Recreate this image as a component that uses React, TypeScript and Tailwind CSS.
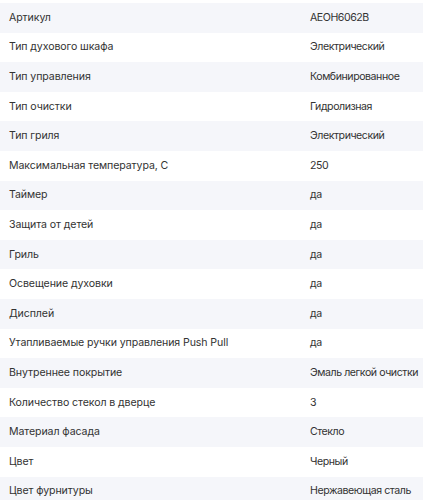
import React from 'react';

const specs: [string, string][] = [
  ['Артикул', 'AEOH6062B'],
  ['Тип духового шкафа', 'Электрический'],
  ['Тип управления', 'Комбинированное'],
  ['Тип очистки', 'Гидролизная'],
  ['Тип гриля', 'Электрический'],
  ['Максимальная температура, С', '250'],
  ['Таймер', 'да'],
  ['Защита от детей', 'да'],
  ['Гриль', 'да'],
  ['Освещение духовки', 'да'],
  ['Дисплей', 'да'],
  ['Утапливаемые ручки управления Push Pull', 'да'],
  ['Внутреннее покрытие', 'Эмаль легкой очистки'],
  ['Количество стекол в дверце', '3'],
  ['Материал фасада', 'Стекло'],
  ['Цвет', 'Черный'],
  ['Цвет фурнитуры', 'Нержавеющая сталь'],
];

const App: React.FC = () => {
  return (
    <div className="w-[423px] h-[500px] overflow-hidden bg-white pt-[3px] font-['Inter',sans-serif] text-[10.6px] tracking-[-0.1px] text-[#333333]">
      {specs.map(([label, value], i) => (
        <div
          key={label}
          className={`h-[29.6px] flex items-center ${i % 2 === 0 ? 'bg-[#f5f6fa]' : 'bg-white'}`}
        >
          <div className="w-[310px] pl-[9px] shrink-0 whitespace-nowrap">{label}</div>
          <div className="whitespace-nowrap tracking-[-0.45px]">{value}</div>
        </div>
      ))}
    </div>
  );
};

export default App;
